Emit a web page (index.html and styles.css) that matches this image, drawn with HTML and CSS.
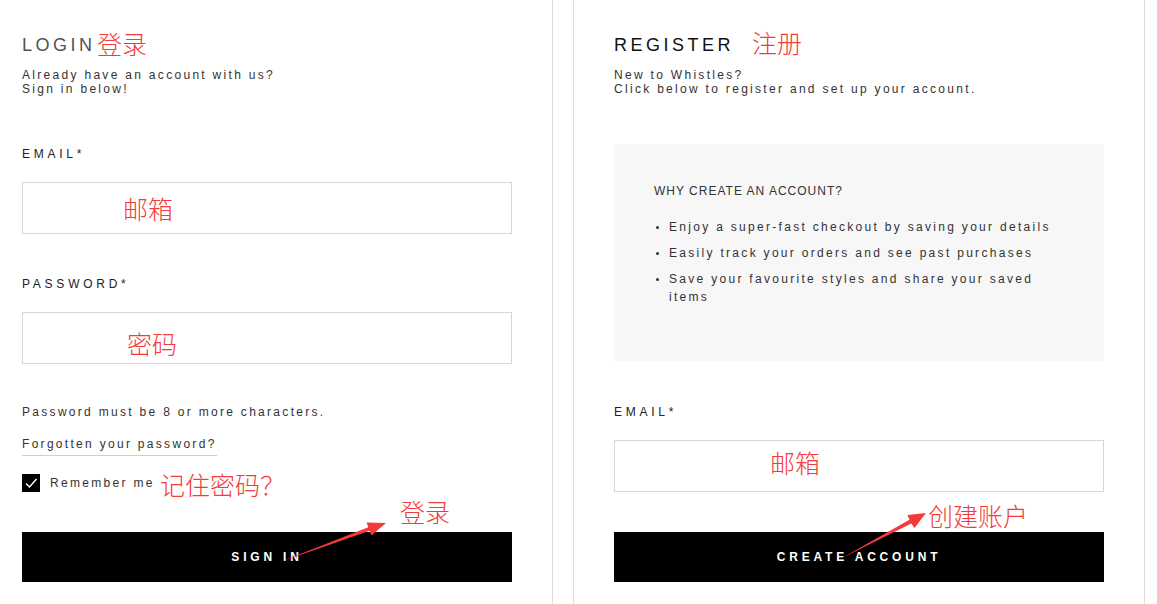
FILE: index.html
```html
<!DOCTYPE html>
<html lang="en">
<head>
    <meta charset="UTF-8">
    <meta name="viewport" content="width=device-width, initial-scale=1.0">
    <title>Login / Register</title>
    <link rel="stylesheet" href="styles.css">
</head>
<body>
    <div class="page">
        <!-- Login column -->
        <section class="panel panel-login">
            <h2 class="panel-title title-login">LOGIN</h2>
            <p class="intro">Already have an account with us?<br>Sign in below!</p>

            <label class="field-label" for="login_email">EMAIL*</label>
            <input class="field" type="text" id="login_email" name="login_email">

            <label class="field-label" for="login_password">PASSWORD*</label>
            <input class="field" type="password" id="login_password" name="login_password">

            <p class="note">Password must be 8 or more characters.</p>
            <a class="forgot" href="#">Forgotten your password?</a>

            <label class="remember">
                <span class="checkbox">
                    <svg width="18" height="18" viewBox="0 0 18 18"><polyline points="4,9.5 7.5,13 14.5,5" fill="none" stroke="#fff" stroke-width="1.4"/></svg>
                </span>
                Remember me
            </label>

            <button class="btn" type="submit">SIGN IN</button>
        </section>

        <!-- Register column -->
        <section class="panel panel-register">
            <h2 class="panel-title title-register">REGISTER</h2>
            <p class="intro">New to Whistles?<br>Click below to register and set up your account.</p>

            <div class="benefits">
                <h3 class="benefits-title">WHY CREATE AN ACCOUNT?</h3>
                <ul class="benefits-list">
                    <li>Enjoy a super-fast checkout by saving your details</li>
                    <li>Easily track your orders and see past purchases</li>
                    <li>Save your favourite styles and share your saved items</li>
                </ul>
            </div>

            <label class="field-label" for="register_email">EMAIL*</label>
            <input class="field" type="text" id="register_email" name="register_email">

            <button class="btn" type="submit">CREATE ACCOUNT</button>
        </section>

        <!-- Red annotations drawn over the page -->
        <div class="notes">
            <span class="note-cn cn-login-title">登录</span>
            <span class="note-cn cn-login-email">邮箱</span>
            <span class="note-cn cn-login-password">密码</span>
            <span class="note-cn cn-remember">记住密码？</span>
            <span class="note-cn cn-sign-in">登录</span>
            <span class="note-cn cn-register-title">注册</span>
            <span class="note-cn cn-register-email">邮箱</span>
            <span class="note-cn cn-create">创建账户</span>
            <svg class="arrows" width="1157" height="604" viewBox="0 0 1157 604">
                <polygon points="280,562 368.3,527.2 366.6,522.4 386,523 371.4,535.6 369.6,530.8" fill="#f43b3b"/>
                <polygon points="840,559 909.5,519.8 907.5,515 926,513 914.5,528 911.3,523.4" fill="#f43b3b"/>
            </svg>
        </div>
    </div>
</body>
</html>
```

FILE: styles.css
```css
* {
    box-sizing: border-box;
}

body {
    margin: 0;
    font-family: "Liberation Sans", Arial, sans-serif;
    font-size: 12px;
    color: #333;
    background-color: #fff;
}

.page {
    position: relative;
    display: flex;
    width: 1157px;
    height: 604px;
    overflow: hidden;
}

.panel {
    display: flex;
    flex-direction: column;
    align-items: flex-start;
    height: 604px;
    padding-top: 33px;
}

.panel-login {
    width: 553px;
    padding-left: 22px;
    padding-right: 40px;
    border-right: 1px solid #dcdcdc;
}

.panel-register {
    width: 572px;
    margin-left: 20px;
    padding-left: 40px;
    padding-right: 40px;
    border-left: 1px solid #dcdcdc;
    border-right: 1px solid #dcdcdc;
}

.panel-title {
    margin: 0;
    font-size: 18px;
    font-weight: normal;
    line-height: 24px;
    letter-spacing: 3.5px;
}

.title-login {
    color: #4f535a;
}

.title-register {
    color: #111;
}

.intro {
    margin: 11px 0 0;
    line-height: 14px;
    letter-spacing: 2.3px;
}

.field-label {
    display: block;
    margin-top: 43px;
    line-height: 14px;
    letter-spacing: 3.75px;
    color: #222;
}

.intro + .field-label {
    margin-top: 51px;
}

.benefits + .field-label {
    margin-top: 44px;
}

.field {
    display: block;
    width: 100%;
    height: 52px;
    margin-top: 21px;
    padding: 0 15px;
    border: 1px solid #d6d6d6;
    border-radius: 0;
    background-color: #fff;
    font-family: inherit;
    font-size: 12px;
}

.field:focus {
    outline: none;
    border-color: #999;
}

.note {
    margin: 41px 0 0;
    line-height: 14px;
    letter-spacing: 2.3px;
}

.forgot {
    display: block;
    margin-top: 18px;
    padding-bottom: 4px;
    line-height: 14px;
    letter-spacing: 2.3px;
    color: #333;
    text-decoration: none;
    border-bottom: 1px solid #cfcfcf;
}

.remember {
    display: flex;
    align-items: center;
    gap: 10px;
    height: 18px;
    margin-top: 18px;
    line-height: 14px;
    letter-spacing: 2.3px;
}

.checkbox {
    display: block;
    width: 18px;
    height: 18px;
    background-color: #000;
}

.checkbox svg {
    display: block;
}

.btn {
    width: 100%;
    height: 50px;
    margin-top: 40px;
    padding: 0;
    border: none;
    background-color: #000;
    color: #fff;
    font-family: inherit;
    font-size: 12px;
    font-weight: bold;
    letter-spacing: 3.8px;
    cursor: pointer;
}

.benefits {
    width: 100%;
    height: 217px;
    margin-top: 48px;
    padding: 40px 40px 0;
    background-color: #f7f7f7;
}

.benefits-title {
    margin: 0;
    font-size: 12px;
    font-weight: normal;
    line-height: 14px;
    letter-spacing: 1px;
    color: #333;
}

.benefits-list {
    margin: 20px 0 0;
    padding: 0;
    list-style: none;
}

.benefits-list li {
    display: flex;
    margin-bottom: 8px;
    line-height: 18px;
    letter-spacing: 2.3px;
}

.benefits-list li::before {
    content: "";
    flex: none;
    width: 3px;
    height: 3px;
    margin: 8px 10px 0 2px;
    border-radius: 50%;
    background-color: #333;
}

/* annotation layer */
.notes {
    position: absolute;
    top: 0;
    left: 0;
    width: 1157px;
    height: 604px;
    pointer-events: none;
}

.arrows {
    position: absolute;
    top: 0;
    left: 0;
}

.note-cn {
    position: absolute;
    font-family: "Noto Sans CJK SC", sans-serif;
    font-size: 25px;
    line-height: 25px;
    font-weight: 300;
    color: #f43b3b;
    white-space: nowrap;
}

.cn-login-title {
    left: 97px;
    top: 31px;
}

.cn-login-email {
    left: 123px;
    top: 196px;
}

.cn-login-password {
    left: 127px;
    top: 331px;
}

.cn-remember {
    left: 160px;
    top: 472px;
}

.cn-sign-in {
    left: 400px;
    top: 499px;
}

.cn-register-title {
    left: 752px;
    top: 30px;
}

.cn-register-email {
    left: 770px;
    top: 450px;
}

.cn-create {
    left: 928px;
    top: 503px;
}
```
